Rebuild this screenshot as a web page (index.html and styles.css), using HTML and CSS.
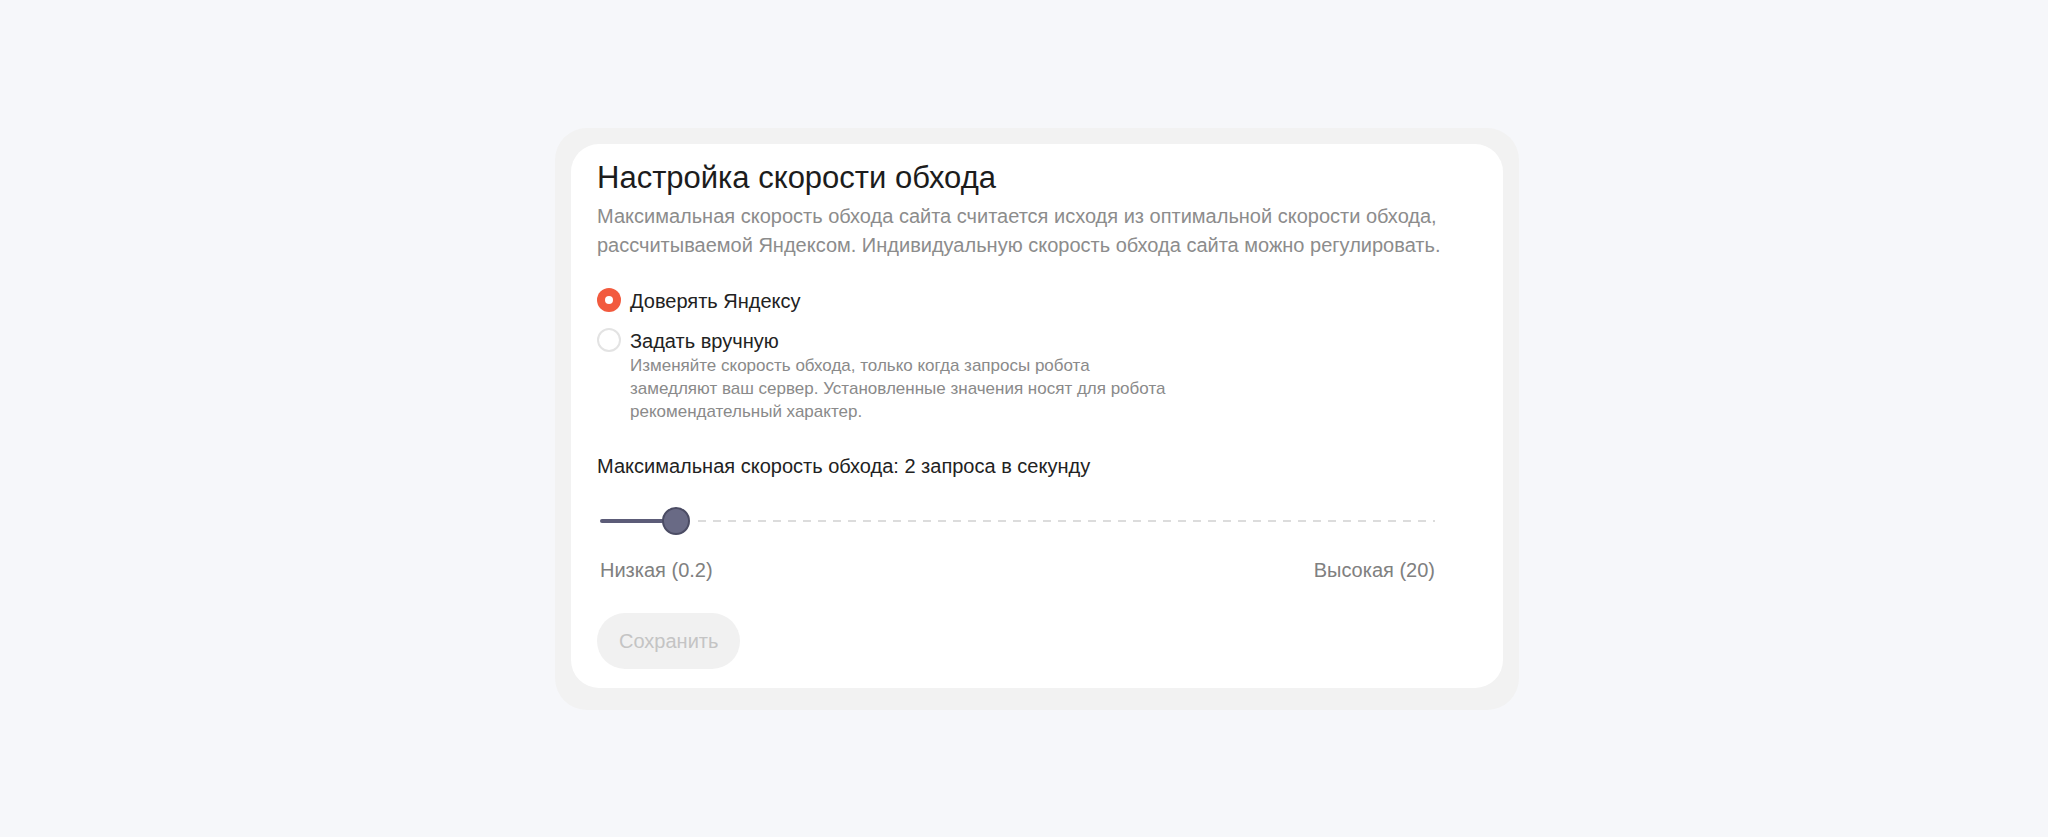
FILE: index.html
```html
<!DOCTYPE html>
<html lang="ru">
<head>
<meta charset="utf-8">
<title>Настройка скорости обхода</title>
<link rel="stylesheet" href="styles.css">
</head>
<body>
<div class="page">
  <div class="frame">
    <div class="card">
      <h1 class="title">Настройка скорости обхода</h1>
      <p class="desc">Максимальная скорость обхода сайта считается исходя из оптимальной скорости обхода,<br>рассчитываемой Яндексом. Индивидуальную скорость обхода сайта можно регулировать.</p>
      <div class="radios">
        <div class="radio-row">
          <span class="radio radio-checked"><span class="radio-dot"></span></span>
          <div class="radio-body">
            <div class="radio-label">Доверять Яндексу</div>
          </div>
        </div>
        <div class="radio-row">
          <span class="radio"></span>
          <div class="radio-body">
            <div class="radio-label">Задать вручную</div>
            <div class="radio-hint">Изменяйте скорость обхода, только когда запросы робота<br>замедляют ваш сервер. Установленные значения носят для робота<br>рекомендательный характер.</div>
          </div>
        </div>
      </div>
      <div class="speed-label">Максимальная скорость обхода: 2 запроса в секунду</div>
      <div class="slider-block">
        <div class="slider">
          <span class="track-fill"></span>
          <span class="thumb"></span>
          <span class="track-rest"></span>
        </div>
        <div class="scale">
          <span>Низкая (0.2)</span>
          <span>Высокая (20)</span>
        </div>
      </div>
      <button class="save" type="button" disabled>Сохранить</button>
    </div>
  </div>
</div>
</body>
</html>
```

FILE: styles.css
```css
html, body {
  margin: 0;
  padding: 0;
  background: #f6f7fa;
  font-family: "Liberation Sans", Arial, sans-serif;
}

.page {
  padding: 128px 0 0 555px;
}

.frame {
  width: 932px;
  padding: 16px 16px 22px;
  background: #f2f2f2;
  border-radius: 32px;
}

.card {
  background: #ffffff;
  border-radius: 28px;
  padding: 16px 26px 19px;
}

.title {
  margin: 0;
  font-size: 31px;
  line-height: 36px;
  font-weight: 400;
  color: #1c1c1c;
}

.desc {
  margin: 6px 0 0;
  font-size: 20px;
  line-height: 29px;
  color: #8c8c8c;
}

.radios {
  margin-top: 28px;
  display: flex;
  flex-direction: column;
  gap: 14px;
}

.radio-row {
  display: flex;
  align-items: flex-start;
  gap: 9px;
}

.radio {
  flex: none;
  width: 24px;
  height: 24px;
  box-sizing: border-box;
  border-radius: 50%;
  border: 2px solid #e3e3e3;
  background: #fff;
  display: flex;
  align-items: center;
  justify-content: center;
}

.radio-checked {
  border: none;
  background: #f25a3e;
}

.radio-dot {
  width: 8px;
  height: 8px;
  border-radius: 50%;
  background: #fff;
}

.radio-label {
  font-size: 20px;
  line-height: 26px;
  color: #222;
}

.radio-hint {
  font-size: 17px;
  line-height: 23px;
  color: #8a8a8a;
}

.speed-label {
  margin-top: 31px;
  font-size: 20px;
  line-height: 24px;
  color: #222;
}

.slider-block {
  width: 835px;
  margin-left: 3px;
}

.slider {
  margin-top: 29px;
  height: 28px;
  display: flex;
  align-items: center;
}

.track-fill {
  width: 64px;
  height: 4px;
  margin-right: -2px;
  border-radius: 2px;
  background: #5c5c78;
}

.thumb {
  flex: none;
  width: 28px;
  height: 28px;
  box-sizing: border-box;
  border-radius: 50%;
  background: #696a85;
  border: 2px solid #4b4c64;
}

.track-rest {
  flex: 1;
  height: 2px;
  margin-left: 8px;
  background: repeating-linear-gradient(to right, #dcdcdc 0 8px, transparent 8px 15px);
}

.scale {
  margin-top: 23px;
  display: flex;
  justify-content: space-between;
  font-size: 20px;
  line-height: 24px;
  color: #808080;
}

.save {
  margin-top: 31px;
  height: 56px;
  padding: 0 22px;
  border: none;
  border-radius: 28px;
  background: #f1f1f1;
  color: #c4c4c4;
  font-family: "Liberation Sans", Arial, sans-serif;
  font-size: 20px;
  cursor: default;
}
```
